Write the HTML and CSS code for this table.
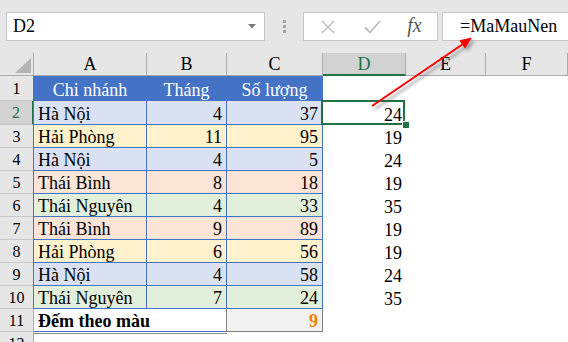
FILE: index.html
```html
<!DOCTYPE html>
<html>
<head>
    <title>Đếm theo màu</title>
    <link rel="stylesheet" href="styles.css">
</head>
<body>
    <div class="formula-bar">
        <div class="name-box">
            <span>D2</span>
            <svg class="caret" width="8" height="5" viewBox="0 0 8 5"><path d="M0 0 H8 L4 4.5 Z" fill="#7a7a7a"/></svg>
        </div>
        <div class="grip"><i></i><i></i><i></i></div>
        <div class="fx-buttons">
            <span class="slot">
                <svg width="14" height="14" viewBox="0 0 14 14"><path d="M1 1 L13 13 M13 1 L1 13" stroke="#bdbdbd" stroke-width="1.4" fill="none"/></svg>
            </span>
            <span class="slot">
                <svg width="17" height="14" viewBox="0 0 17 14"><path d="M1 7.5 L6 12.5 L16 1" stroke="#bdbdbd" stroke-width="1.8" fill="none"/></svg>
            </span>
            <span class="slot fx">fx</span>
        </div>
        <div class="formula-input">=MaMauNen</div>
    </div>

    <div class="sheet">
        <!-- column headings -->
        <div class="corner"></div>
        <div class="hd">A</div>
        <div class="hd">B</div>
        <div class="hd">C</div>
        <div class="hd active">D</div>
        <div class="hd">E</div>
        <div class="hd">F</div>

        <!-- row 1 -->
        <div class="rh">1</div>
        <div class="c t th first">Chi nhánh</div>
        <div class="c t th">Tháng</div>
        <div class="c t th">Số lượng</div>
        <div class="c"></div><div class="c"></div><div class="c"></div>

        <!-- row 2 -->
        <div class="rh active">2</div>
        <div class="c t hn first">Hà Nội</div>
        <div class="c t hn num">4</div>
        <div class="c t hn num">37</div>
        <div class="c num selected">24</div>
        <div class="c"></div><div class="c"></div>

        <!-- row 3 -->
        <div class="rh">3</div>
        <div class="c t hp first">Hải Phòng</div>
        <div class="c t hp num">11</div>
        <div class="c t hp num">95</div>
        <div class="c num">19</div>
        <div class="c"></div><div class="c"></div>

        <!-- row 4 -->
        <div class="rh">4</div>
        <div class="c t hn first">Hà Nội</div>
        <div class="c t hn num">4</div>
        <div class="c t hn num">5</div>
        <div class="c num">24</div>
        <div class="c"></div><div class="c"></div>

        <!-- row 5 -->
        <div class="rh">5</div>
        <div class="c t tb first">Thái Bình</div>
        <div class="c t tb num">8</div>
        <div class="c t tb num">18</div>
        <div class="c num">19</div>
        <div class="c"></div><div class="c"></div>

        <!-- row 6 -->
        <div class="rh">6</div>
        <div class="c t tn first">Thái Nguyên</div>
        <div class="c t tn num">4</div>
        <div class="c t tn num">33</div>
        <div class="c num">35</div>
        <div class="c"></div><div class="c"></div>

        <!-- row 7 -->
        <div class="rh">7</div>
        <div class="c t tb first">Thái Bình</div>
        <div class="c t tb num">9</div>
        <div class="c t tb num">89</div>
        <div class="c num">19</div>
        <div class="c"></div><div class="c"></div>

        <!-- row 8 -->
        <div class="rh">8</div>
        <div class="c t hp first">Hải Phòng</div>
        <div class="c t hp num">6</div>
        <div class="c t hp num">56</div>
        <div class="c num">19</div>
        <div class="c"></div><div class="c"></div>

        <!-- row 9 -->
        <div class="rh">9</div>
        <div class="c t hn first">Hà Nội</div>
        <div class="c t hn num">4</div>
        <div class="c t hn num">58</div>
        <div class="c num">24</div>
        <div class="c"></div><div class="c"></div>

        <!-- row 10 -->
        <div class="rh">10</div>
        <div class="c t tn first">Thái Nguyên</div>
        <div class="c t tn num">7</div>
        <div class="c t tn num">24</div>
        <div class="c num">35</div>
        <div class="c"></div><div class="c"></div>

        <!-- row 11 -->
        <div class="rh">11</div>
        <div class="c total">Đếm theo màu</div>
        <div class="c num calc">9</div>
        <div class="c"></div><div class="c"></div><div class="c"></div>

        <!-- row 12 -->
        <div class="rh">12</div>
        <div class="c under"></div>
        <div class="c"></div><div class="c"></div><div class="c"></div><div class="c"></div>
    </div>

    <svg class="arrow" width="568" height="342" viewBox="0 0 568 342">
        <defs>
            <filter id="soft" x="-20%" y="-20%" width="140%" height="140%">
                <feGaussianBlur stdDeviation="1.5"/>
            </filter>
        </defs>
        <g opacity="0.45" filter="url(#soft)" transform="translate(3 3)">
            <line x1="372" y1="106" x2="463" y2="44" stroke="#555" stroke-width="2.2"/>
            <polygon points="472,37.5 465,48.5 459.3,40.2" fill="#555"/>
        </g>
        <line x1="372" y1="106" x2="463" y2="44" stroke="#ff0000" stroke-width="2"/>
        <polygon points="472,37.5 465,48.5 459.3,40.2" fill="#ff0000"/>
    </svg>
</body>
</html>
```

FILE: styles.css
```css
body {
    margin: 0;
    width: 568px;
    height: 342px;
    overflow: hidden;
    position: relative;
    background: #ffffff;
    font-family: "Liberation Serif", Tinos, "DejaVu Serif", serif;
    color: #000000;
}

/* formula bar */

.formula-bar {
    display: flex;
    align-items: flex-start;
    height: 53px;
    padding-top: 12px;
    box-sizing: border-box;
    background: #e6e6e6;
}

.name-box {
    margin-left: 6px;
    width: 259px;
    height: 29px;
    box-sizing: border-box;
    border: 1px solid #c6c6c6;
    background: #ffffff;
    display: flex;
    align-items: center;
    justify-content: space-between;
    padding: 0 8px 0 6px;
    font-size: 18px;
}

.grip {
    width: 38px;
    display: flex;
    flex-direction: column;
    align-items: center;
    gap: 2px;
    padding-top: 8px;
}

.grip i {
    display: block;
    width: 3px;
    height: 3px;
    background: #a6a6a6;
}

.fx-buttons {
    width: 135px;
    height: 29px;
    box-sizing: border-box;
    border: 1px solid #c6c6c6;
    background: #ffffff;
    display: flex;
    align-items: center;
    padding-left: 1px;
}

.slot {
    width: 45px;
    display: flex;
    justify-content: center;
    align-items: center;
}

.fx {
    font-family: "Liberation Serif", serif;
    font-style: italic;
    font-size: 20px;
    color: #595959;
    margin-top: -2px;
    margin-left: -3px;
}

.formula-input {
    margin-left: 4px;
    flex: 1;
    height: 29px;
    box-sizing: border-box;
    border: 1px solid #c6c6c6;
    border-right: none;
    background: #ffffff;
    padding-left: 17px;
    display: flex;
    align-items: center;
    font-size: 18px;
}

/* sheet grid */

.sheet {
    display: grid;
    grid-template-columns: 34px 113px 80px 96px 83px 80px 82px;
    grid-template-rows: 23px 25px 24px repeat(9, 23px) 23px;
}

.sheet > div {
    box-sizing: border-box;
}

.corner {
    position: relative;
    background: #e6e6e6;
    border-right: 1px solid #ababab;
    border-bottom: 1px solid #ababab;
}

.corner::after {
    content: "";
    position: absolute;
    left: 15px;
    top: 5px;
    width: 16px;
    height: 15px;
    background: #b4b4b4;
    clip-path: polygon(100% 0, 100% 100%, 0 100%);
}

.hd {
    background: #e6e6e6;
    border-right: 1px solid #ababab;
    border-bottom: 1px solid #ababab;
    display: flex;
    align-items: center;
    justify-content: center;
    font-size: 18px;
    padding-top: 1px;
}

.hd.active {
    background: #d2d2d2;
    color: #217346;
    border-bottom: 2px solid #217346;
}

.rh {
    background: #e6e6e6;
    border-right: 1px solid #ababab;
    border-bottom: 1px solid #c8c8c8;
    display: flex;
    align-items: center;
    justify-content: center;
    font-size: 16px;
    padding-top: 1px;
}

.rh.active {
    background: #d2d2d2;
    color: #217346;
    border-right: 2px solid #217346;
}

.c {
    display: flex;
    align-items: flex-end;
    padding: 0 4px 1.5px 4px;
    font-size: 18px;
    line-height: 18px;
    white-space: nowrap;
    background: #ffffff;
}

.num {
    justify-content: flex-end;
}

/* table A1:C10 */

.t {
    border-right: 1px solid #4472c4;
    border-bottom: 1px solid #4472c4;
}

.t.first {
    box-shadow: -1px 0 0 #4472c4;
}

.th {
    background: #4472c4;
    color: #ffffff;
    justify-content: center;
}

.hn { background: #d9e1f2; }
.hp { background: #fff2cc; }
.tb { background: #fce4d6; }
.tn { background: #e2efda; }

.total {
    grid-column: span 2;
    font-weight: bold;
    border-bottom: 1px solid #4472c4;
}

.calc {
    background: #f2f2f2;
    color: #fa7d00;
    font-weight: bold;
    border-left: 1px solid #7f7f7f;
    border-right: 1px solid #7f7f7f;
    border-bottom: 1px solid #7f7f7f;
    margin-left: -1px;
}

.under {
    grid-column: span 2;
    margin-top: 1px;
    border-top: 1px solid #8c8c8c;
}

/* active cell D2 */

.selected {
    position: relative;
    z-index: 1;
    overflow: visible;
}

.selected::after {
    content: "";
    position: absolute;
    left: -2px;
    right: 1px;
    top: -1px;
    bottom: 0;
    border: 2px solid #217346;
}

.selected::before {
    content: "";
    position: absolute;
    right: -3px;
    bottom: -3px;
    width: 6px;
    height: 6px;
    background: #217346;
    box-shadow: 0 0 0 1px #ffffff;
    z-index: 2;
}

.arrow {
    position: absolute;
    left: 0;
    top: 0;
    z-index: 3;
    pointer-events: none;
}
```
